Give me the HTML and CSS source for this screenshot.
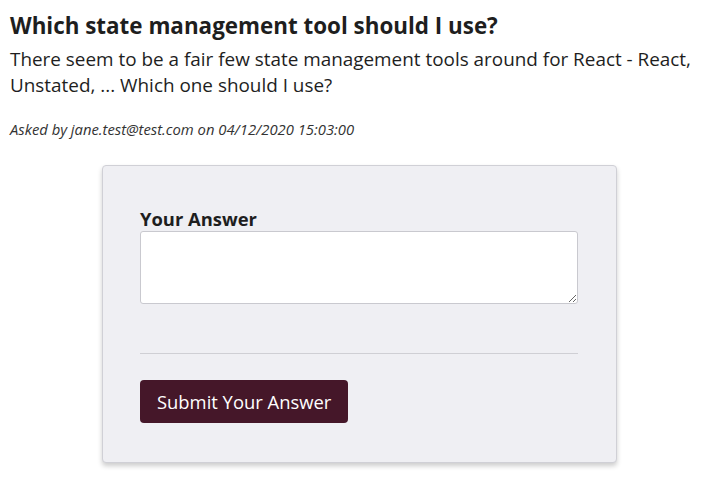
FILE: index.html
```html
<!DOCTYPE html>
<html lang="en">
<head>
<meta charset="utf-8">
<title>Question</title>
<link rel="stylesheet" href="styles.css">
</head>
<body>
<main class="page">
  <h3 class="q-title">Which state management tool should I use?</h3>
  <p class="q-content">There seem to be a fair few state management tools around for React - React, Unstated, ... Which one should I use?</p>
  <div class="q-meta">Asked by jane.test@test.com on 04/12/2020 15:03:00</div>
  <form class="card">
    <div class="field">
      <label class="field-label" for="content">Your Answer</label>
      <textarea id="content" class="field-input"></textarea>
    </div>
    <hr class="divider">
    <div class="actions">
      <button type="submit" class="btn">Submit Your Answer</button>
    </div>
  </form>
</main>
</body>
</html>
```
FILE: styles.css
```css
html, body {
  margin: 0;
  padding: 0;
  background: #ffffff;
}
body {
  font-family: "Open Sans", "Noto Sans", sans-serif;
  color: #1e1e1e;
}
.page {
  padding: 11px 10px 20px 10px;
}
.q-title {
  margin: 0;
  font-size: 22.4px;
  font-weight: 700;
  line-height: 30px;
}
.q-content {
  margin: 5px 0 0 0;
  font-size: 18.9px;
  line-height: 26px;
}
.q-meta {
  margin-top: 22px;
  font-size: 14.8px;
  font-style: italic;
  color: #333333;
  line-height: 18px;
}
.card {
  margin: 27px 0 0 92px;
  width: 438px;
  padding: 41px 38px 39px 37px;
  background: #efeff3;
  border: 1px solid #d0d0d6;
  border-radius: 4px;
  box-shadow: 0 3px 5px rgba(0, 0, 0, 0.2);
}
.field {
  display: flex;
  flex-direction: column;
}
.field-label {
  font-size: 18.4px;
  font-weight: 700;
  line-height: 24px;
}
.field-input {
  margin: 0;
  height: 73px;
  box-sizing: border-box;
  border: 1px solid #c9c9cf;
  border-radius: 3px;
  background: #fff;
  font-family: inherit;
  font-size: 16px;
  resize: vertical;
}
.divider {
  margin: 49px 0 0 0;
  border: 0;
  border-top: 1px solid #cfcfd4;
}
.actions {
  display: flex;
  margin-top: 26px;
}
.btn {
  height: 43px;
  padding: 0 17px;
  border: 0;
  border-radius: 4px;
  background: #451729;
  color: #ffffff;
  font-family: inherit;
  font-size: 18.4px;
  cursor: pointer;
}
```
